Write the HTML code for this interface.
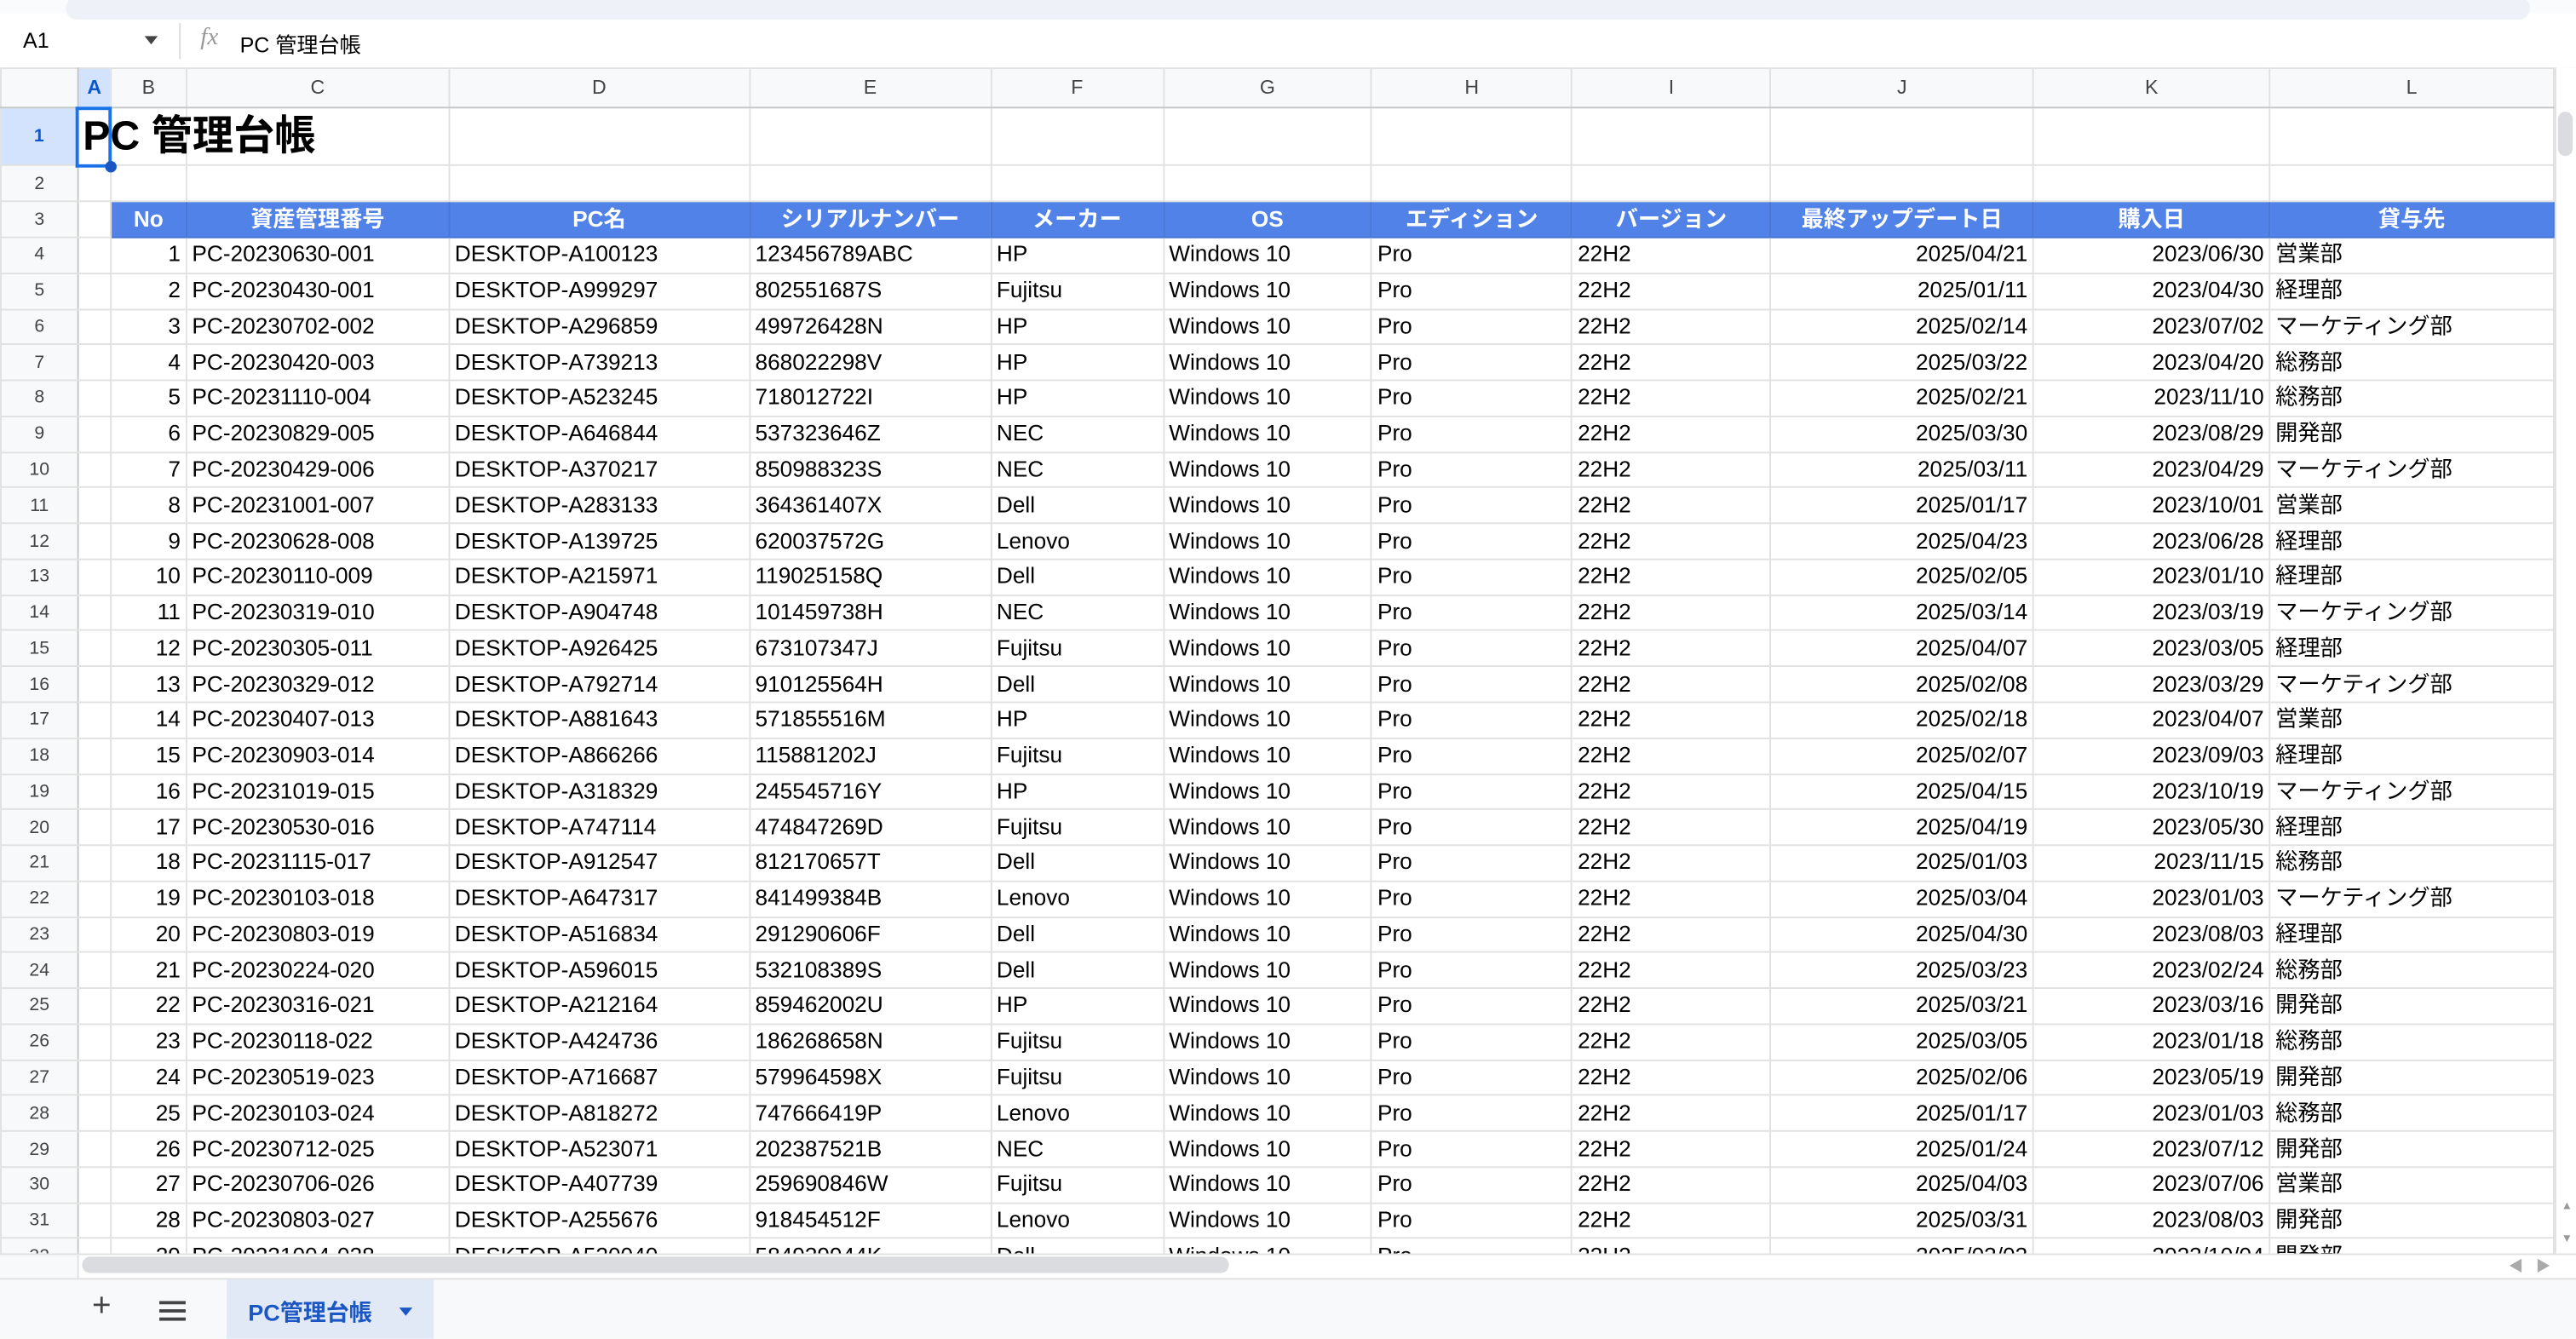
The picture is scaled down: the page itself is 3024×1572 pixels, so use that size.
<!DOCTYPE html>
<html><head><meta charset="utf-8"><style>
html,body{margin:0;padding:0;width:3024px;height:1572px;overflow:hidden;background:#f9fbfd}
#s{position:absolute;left:0;top:0;width:1568px;height:815.1px;transform:scale(1.92857);transform-origin:0 0;background:#f9fbfd;font-family:"Liberation Sans","Noto Sans CJK JP",sans-serif;overflow:hidden}
.top{position:absolute;left:0;top:8px;width:1568px;height:33px;background:#fff}
.topstrip{position:absolute;left:40px;top:-10px;width:1500px;height:14px;background:#eef2f8;border-radius:10px}
.grid{position:absolute;left:0;top:40.5px;width:1568px;height:722px;overflow:hidden;background:#fff}
table{border-collapse:collapse;table-layout:fixed;font-size:13.6px;color:#000}
td{border:1px solid #e1e1e1;padding:0 3px;white-space:nowrap;overflow:visible;height:20.78px;line-height:20px}
tr.ch td{background:#f8f9fa;text-align:center;color:#444;font-size:12px;height:23px;border-bottom:1.5px solid #c4c7c5}
td.rh{background:#f8f9fa;text-align:center;color:#444;font-size:11px;border-right:1.5px solid #c4c7c5}
.r{text-align:right}
tr.hd td.b{background:#5182e8;color:#fff;font-weight:bold;text-align:center;border-color:#4a77d4}
.bot{position:absolute;left:0;top:778px;width:1568px;height:37px;background:#f8f9fa;border-top:1px solid #e1e1e1}
</style></head><body><div id="s">
<div class="top"><div class="topstrip"></div>
<div style="position:absolute;left:14px;top:9px;font-size:13px">A1</div>
<div style="position:absolute;left:88px;top:14px;width:0;height:0;border-left:4px solid transparent;border-right:4px solid transparent;border-top:5px solid #444"></div>
<div style="position:absolute;left:109px;top:6px;width:1px;height:22px;background:#ddd"></div>
<div style="position:absolute;left:122px;top:7px;font-size:15px;font-style:italic;color:#999;font-family:'Liberation Serif',serif">fx</div>
<div style="position:absolute;left:146px;top:9px;font-size:13px">PC 管理台帳</div>
</div>
<div class="grid">
<table>
<colgroup><col style="width:47px"><col style="width:20px"><col style="width:46px"><col style="width:160px"><col style="width:183px"><col style="width:147px"><col style="width:105px"><col style="width:127px"><col style="width:122px"><col style="width:121px"><col style="width:160px"><col style="width:144px"><col style="width:173px"><col style="width:13px"></colgroup>
<tr class="ch"><td style="border-right:1.5px solid #c4c7c5"></td><td style="background:#d3e3fd;font-weight:bold;color:#0b57d0">A</td><td>B</td><td>C</td><td>D</td><td>E</td><td>F</td><td>G</td><td>H</td><td>I</td><td>J</td><td>K</td><td>L</td><td style="background:#fff"></td></tr>
<tr><td class="rh" style="height:33px;background:#d3e3fd;font-weight:bold;color:#0b57d0">1</td><td style="height:33px;border:2px solid #1a73e8;position:relative;font-size:25px;font-weight:bold;padding:0 0 0 2px;overflow:visible"><span style="position:absolute;left:2px;top:0px;line-height:33px">PC 管理台帳</span><div style="position:absolute;right:-5px;bottom:-5px;width:7px;height:7px;border-radius:50%;background:#1a56c4"></div></td><td style="border-left:none"></td><td></td><td></td><td></td><td></td><td></td><td></td><td></td><td></td><td></td><td></td><td></td></tr>
<tr><td class="rh">2</td><td></td><td></td><td></td><td></td><td></td><td></td><td></td><td></td><td></td><td></td><td></td><td></td><td></td></tr>
<tr class="hd"><td class="rh">3</td><td></td><td class="b">No</td><td class="b">資産管理番号</td><td class="b">PC名</td><td class="b">シリアルナンバー</td><td class="b">メーカー</td><td class="b">OS</td><td class="b">エディション</td><td class="b">バージョン</td><td class="b">最終アップデート日</td><td class="b">購入日</td><td class="b">貸与先</td><td></td></tr>
<tr><td class="rh">4</td><td></td><td class="r">1</td><td>PC-20230630-001</td><td>DESKTOP-A100123</td><td>123456789ABC</td><td>HP</td><td>Windows 10</td><td>Pro</td><td>22H2</td><td class="r">2025/04/21</td><td class="r">2023/06/30</td><td>営業部</td><td></td></tr>
<tr><td class="rh">5</td><td></td><td class="r">2</td><td>PC-20230430-001</td><td>DESKTOP-A999297</td><td>802551687S</td><td>Fujitsu</td><td>Windows 10</td><td>Pro</td><td>22H2</td><td class="r">2025/01/11</td><td class="r">2023/04/30</td><td>経理部</td><td></td></tr>
<tr><td class="rh">6</td><td></td><td class="r">3</td><td>PC-20230702-002</td><td>DESKTOP-A296859</td><td>499726428N</td><td>HP</td><td>Windows 10</td><td>Pro</td><td>22H2</td><td class="r">2025/02/14</td><td class="r">2023/07/02</td><td>マーケティング部</td><td></td></tr>
<tr><td class="rh">7</td><td></td><td class="r">4</td><td>PC-20230420-003</td><td>DESKTOP-A739213</td><td>868022298V</td><td>HP</td><td>Windows 10</td><td>Pro</td><td>22H2</td><td class="r">2025/03/22</td><td class="r">2023/04/20</td><td>総務部</td><td></td></tr>
<tr><td class="rh">8</td><td></td><td class="r">5</td><td>PC-20231110-004</td><td>DESKTOP-A523245</td><td>718012722I</td><td>HP</td><td>Windows 10</td><td>Pro</td><td>22H2</td><td class="r">2025/02/21</td><td class="r">2023/11/10</td><td>総務部</td><td></td></tr>
<tr><td class="rh">9</td><td></td><td class="r">6</td><td>PC-20230829-005</td><td>DESKTOP-A646844</td><td>537323646Z</td><td>NEC</td><td>Windows 10</td><td>Pro</td><td>22H2</td><td class="r">2025/03/30</td><td class="r">2023/08/29</td><td>開発部</td><td></td></tr>
<tr><td class="rh">10</td><td></td><td class="r">7</td><td>PC-20230429-006</td><td>DESKTOP-A370217</td><td>850988323S</td><td>NEC</td><td>Windows 10</td><td>Pro</td><td>22H2</td><td class="r">2025/03/11</td><td class="r">2023/04/29</td><td>マーケティング部</td><td></td></tr>
<tr><td class="rh">11</td><td></td><td class="r">8</td><td>PC-20231001-007</td><td>DESKTOP-A283133</td><td>364361407X</td><td>Dell</td><td>Windows 10</td><td>Pro</td><td>22H2</td><td class="r">2025/01/17</td><td class="r">2023/10/01</td><td>営業部</td><td></td></tr>
<tr><td class="rh">12</td><td></td><td class="r">9</td><td>PC-20230628-008</td><td>DESKTOP-A139725</td><td>620037572G</td><td>Lenovo</td><td>Windows 10</td><td>Pro</td><td>22H2</td><td class="r">2025/04/23</td><td class="r">2023/06/28</td><td>経理部</td><td></td></tr>
<tr><td class="rh">13</td><td></td><td class="r">10</td><td>PC-20230110-009</td><td>DESKTOP-A215971</td><td>119025158Q</td><td>Dell</td><td>Windows 10</td><td>Pro</td><td>22H2</td><td class="r">2025/02/05</td><td class="r">2023/01/10</td><td>経理部</td><td></td></tr>
<tr><td class="rh">14</td><td></td><td class="r">11</td><td>PC-20230319-010</td><td>DESKTOP-A904748</td><td>101459738H</td><td>NEC</td><td>Windows 10</td><td>Pro</td><td>22H2</td><td class="r">2025/03/14</td><td class="r">2023/03/19</td><td>マーケティング部</td><td></td></tr>
<tr><td class="rh">15</td><td></td><td class="r">12</td><td>PC-20230305-011</td><td>DESKTOP-A926425</td><td>673107347J</td><td>Fujitsu</td><td>Windows 10</td><td>Pro</td><td>22H2</td><td class="r">2025/04/07</td><td class="r">2023/03/05</td><td>経理部</td><td></td></tr>
<tr><td class="rh">16</td><td></td><td class="r">13</td><td>PC-20230329-012</td><td>DESKTOP-A792714</td><td>910125564H</td><td>Dell</td><td>Windows 10</td><td>Pro</td><td>22H2</td><td class="r">2025/02/08</td><td class="r">2023/03/29</td><td>マーケティング部</td><td></td></tr>
<tr><td class="rh">17</td><td></td><td class="r">14</td><td>PC-20230407-013</td><td>DESKTOP-A881643</td><td>571855516M</td><td>HP</td><td>Windows 10</td><td>Pro</td><td>22H2</td><td class="r">2025/02/18</td><td class="r">2023/04/07</td><td>営業部</td><td></td></tr>
<tr><td class="rh">18</td><td></td><td class="r">15</td><td>PC-20230903-014</td><td>DESKTOP-A866266</td><td>115881202J</td><td>Fujitsu</td><td>Windows 10</td><td>Pro</td><td>22H2</td><td class="r">2025/02/07</td><td class="r">2023/09/03</td><td>経理部</td><td></td></tr>
<tr><td class="rh">19</td><td></td><td class="r">16</td><td>PC-20231019-015</td><td>DESKTOP-A318329</td><td>245545716Y</td><td>HP</td><td>Windows 10</td><td>Pro</td><td>22H2</td><td class="r">2025/04/15</td><td class="r">2023/10/19</td><td>マーケティング部</td><td></td></tr>
<tr><td class="rh">20</td><td></td><td class="r">17</td><td>PC-20230530-016</td><td>DESKTOP-A747114</td><td>474847269D</td><td>Fujitsu</td><td>Windows 10</td><td>Pro</td><td>22H2</td><td class="r">2025/04/19</td><td class="r">2023/05/30</td><td>経理部</td><td></td></tr>
<tr><td class="rh">21</td><td></td><td class="r">18</td><td>PC-20231115-017</td><td>DESKTOP-A912547</td><td>812170657T</td><td>Dell</td><td>Windows 10</td><td>Pro</td><td>22H2</td><td class="r">2025/01/03</td><td class="r">2023/11/15</td><td>総務部</td><td></td></tr>
<tr><td class="rh">22</td><td></td><td class="r">19</td><td>PC-20230103-018</td><td>DESKTOP-A647317</td><td>841499384B</td><td>Lenovo</td><td>Windows 10</td><td>Pro</td><td>22H2</td><td class="r">2025/03/04</td><td class="r">2023/01/03</td><td>マーケティング部</td><td></td></tr>
<tr><td class="rh">23</td><td></td><td class="r">20</td><td>PC-20230803-019</td><td>DESKTOP-A516834</td><td>291290606F</td><td>Dell</td><td>Windows 10</td><td>Pro</td><td>22H2</td><td class="r">2025/04/30</td><td class="r">2023/08/03</td><td>経理部</td><td></td></tr>
<tr><td class="rh">24</td><td></td><td class="r">21</td><td>PC-20230224-020</td><td>DESKTOP-A596015</td><td>532108389S</td><td>Dell</td><td>Windows 10</td><td>Pro</td><td>22H2</td><td class="r">2025/03/23</td><td class="r">2023/02/24</td><td>総務部</td><td></td></tr>
<tr><td class="rh">25</td><td></td><td class="r">22</td><td>PC-20230316-021</td><td>DESKTOP-A212164</td><td>859462002U</td><td>HP</td><td>Windows 10</td><td>Pro</td><td>22H2</td><td class="r">2025/03/21</td><td class="r">2023/03/16</td><td>開発部</td><td></td></tr>
<tr><td class="rh">26</td><td></td><td class="r">23</td><td>PC-20230118-022</td><td>DESKTOP-A424736</td><td>186268658N</td><td>Fujitsu</td><td>Windows 10</td><td>Pro</td><td>22H2</td><td class="r">2025/03/05</td><td class="r">2023/01/18</td><td>総務部</td><td></td></tr>
<tr><td class="rh">27</td><td></td><td class="r">24</td><td>PC-20230519-023</td><td>DESKTOP-A716687</td><td>579964598X</td><td>Fujitsu</td><td>Windows 10</td><td>Pro</td><td>22H2</td><td class="r">2025/02/06</td><td class="r">2023/05/19</td><td>開発部</td><td></td></tr>
<tr><td class="rh">28</td><td></td><td class="r">25</td><td>PC-20230103-024</td><td>DESKTOP-A818272</td><td>747666419P</td><td>Lenovo</td><td>Windows 10</td><td>Pro</td><td>22H2</td><td class="r">2025/01/17</td><td class="r">2023/01/03</td><td>総務部</td><td></td></tr>
<tr><td class="rh">29</td><td></td><td class="r">26</td><td>PC-20230712-025</td><td>DESKTOP-A523071</td><td>202387521B</td><td>NEC</td><td>Windows 10</td><td>Pro</td><td>22H2</td><td class="r">2025/01/24</td><td class="r">2023/07/12</td><td>開発部</td><td></td></tr>
<tr><td class="rh">30</td><td></td><td class="r">27</td><td>PC-20230706-026</td><td>DESKTOP-A407739</td><td>259690846W</td><td>Fujitsu</td><td>Windows 10</td><td>Pro</td><td>22H2</td><td class="r">2025/04/03</td><td class="r">2023/07/06</td><td>営業部</td><td></td></tr>
<tr><td class="rh">31</td><td></td><td class="r">28</td><td>PC-20230803-027</td><td>DESKTOP-A255676</td><td>918454512F</td><td>Lenovo</td><td>Windows 10</td><td>Pro</td><td>22H2</td><td class="r">2025/03/31</td><td class="r">2023/08/03</td><td>開発部</td><td></td></tr>
<tr><td class="rh">32</td><td></td><td class="r">29</td><td>PC-20231004-028</td><td>DESKTOP-A520040</td><td>584939944K</td><td>Dell</td><td>Windows 10</td><td>Pro</td><td>22H2</td><td class="r">2025/03/03</td><td class="r">2023/10/04</td><td>開発部</td><td></td></tr>
</table>
<div style="position:absolute;left:1555px;top:0;width:13px;height:722px;background:#fff;border-left:1px solid #e1e1e1"></div>
<div style="position:absolute;left:1557px;top:27px;width:9px;height:27px;background:#dadce0;border-radius:5px"></div>
<div style="position:absolute;left:1559px;top:690px;font-size:7px;color:#999">▲</div>
<div style="position:absolute;left:1559px;top:710px;font-size:7px;color:#999">▼</div>
</div>
<div style="position:absolute;left:0;top:763px;width:1568px;height:15px;background:#fff;border-top:1px solid #e1e1e1"></div>
<div style="position:absolute;left:0;top:764px;width:47px;height:14px;background:#f8f9fa;border-right:1px solid #e1e1e1"></div>
<div style="position:absolute;left:50px;top:765px;width:698px;height:10px;background:#dadce0;border-radius:5px"></div>
<div style="position:absolute;left:1527px;top:764px;font-size:9px;color:#aaa">&#9664;&nbsp;&nbsp;&nbsp;&#9654;</div>
<div class="bot">
<div style="position:absolute;left:56px;top:5px;font-size:20px;color:#444">+</div>
<div style="position:absolute;left:97px;top:13px;width:16px;height:2px;background:#444;box-shadow:0 5px 0 #444,0 10px 0 #444"></div>
<div style="position:absolute;left:138px;top:0;width:126px;height:37px;background:#e1e9f7"></div>
<div style="position:absolute;left:151px;top:10px;font-size:14px;font-weight:bold;color:#1a56c4">PC管理台帳</div>
<div style="position:absolute;left:243px;top:17px;width:0;height:0;border-left:4px solid transparent;border-right:4px solid transparent;border-top:5px solid #1a56c4"></div>
</div>
</div></body></html>
